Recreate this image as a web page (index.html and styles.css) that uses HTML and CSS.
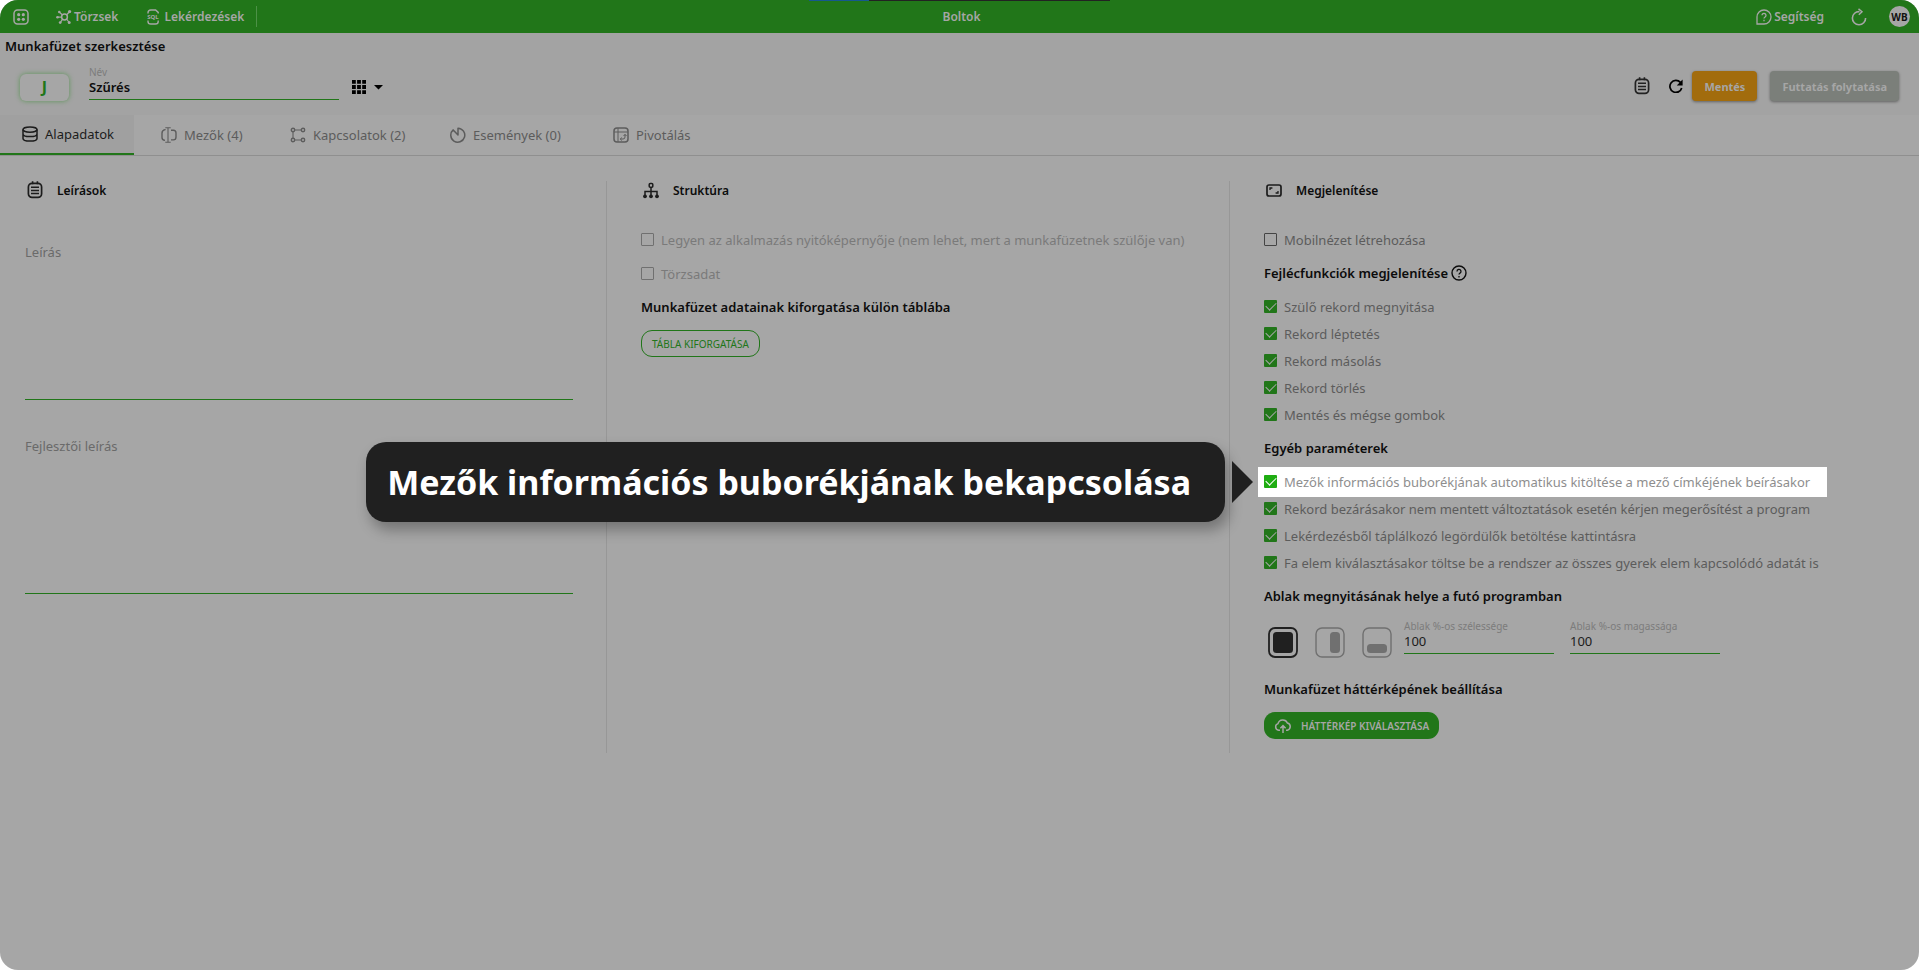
FILE: index.html
```html
<!DOCTYPE html>
<html lang="hu">
<head>
<meta charset="utf-8">
<title>Boltok</title>
<link rel="stylesheet" href="styles.css">
</head>
<body>
<div class="app">
  <header class="topbar">
    <div class="load-strip"></div>
    <nav class="topnav">
      <a class="nav-link app-menu" href="#" aria-label="Alkalmazások">
        <svg width="16" height="16" viewBox="0 0 16 16"><rect x="1" y="1" width="14" height="14" rx="3.5" fill="none" stroke="currentColor" stroke-width="1.5"/><g fill="currentColor"><circle cx="5.7" cy="5.7" r="1.6"/><circle cx="10.3" cy="5.7" r="1.6"/><circle cx="5.7" cy="10.3" r="1.6"/><circle cx="10.3" cy="10.3" r="1.6"/></g></svg>
      </a>
      <a class="nav-link hub" href="#">
        <svg width="16" height="16" viewBox="0 0 16 16"><g fill="none" stroke="currentColor" stroke-width="1.2"><circle cx="8.5" cy="8" r="2.9" stroke-width="1.5"/><path d="M6.5 6 3.5 3.2M10.5 6l2.7-3M10.6 10l2.2 3M6.6 10.2l-2 3M5.5 8.2H2"/></g><g fill="currentColor"><circle cx="3.3" cy="3" r="1.3"/><circle cx="13.6" cy="2.6" r="1.6"/><circle cx="13.2" cy="13.4" r="1.5"/><circle cx="4.2" cy="13.6" r="1.4"/><circle cx="1.5" cy="8.3" r="1.3"/></g></svg>
        <span>Törzsek</span>
      </a>
      <a class="nav-link sql" href="#">
        <svg width="14" height="16" viewBox="0 0 14 16"><path d="M2 4.6V3.8Q2 1 4.8 1h4.8l2.6 2.4v1.2M2 11.6v.8Q2 15 4.8 15h4.6q2.8 0 2.8-2.6v-.8" fill="none" stroke="currentColor" stroke-width="1.4"/><text x="7" y="10.4" class="sql-text" text-anchor="middle">SQL</text></svg>
        <span>Lekérdezések</span>
      </a>
      <span class="nav-divider"></span>
    </nav>
    <h1 class="app-title">Boltok</h1>
    <div class="top-actions">
      <a class="nav-link help" href="#">
        <svg width="16" height="16" viewBox="0 0 16 16"><path d="M1 15V8a7 7 0 1 1 7 7Z" fill="none" stroke="currentColor" stroke-width="1.3"/><path d="M6 6.3a2 2 0 1 1 3.1 1.7Q8 8.7 8 9.6M8 10.8v1.5" fill="none" stroke="currentColor" stroke-width="1.3"/></svg>
        <span>Segítség</span>
      </a>
      <button class="icon-btn" type="button" aria-label="Frissítés">
        <svg width="16" height="18" viewBox="0 0 16 18"><path d="M8.5 3.6A6.6 6.6 0 1 0 14.6 10" fill="none" stroke="currentColor" stroke-width="1.6"/><path d="M7.5.8 11 3.7 7.8 6.8" fill="none" stroke="currentColor" stroke-width="1.5"/></svg>
      </button>
      <button class="avatar" type="button">WB</button>
    </div>
  </header>

  <section class="sheet-head">
    <h2 class="sheet-title">Munkafüzet szerkesztése</h2>
    <div class="sheet-row">
      <div class="sheet-left">
        <button class="letter" type="button">J</button>
        <div class="field name-field">
          <label for="name">Név</label>
          <input id="name" type="text" value="Szűrés">
        </div>
        <button class="grid-btn" type="button" aria-label="Nézet">
          <svg width="32" height="14" viewBox="0 0 32 14" fill="currentColor"><path d="M0 0h3.8v3.8H0zM5.1 0h3.8v3.8H5.1zM10.2 0H14v3.8h-3.8zM0 5.1h3.8v3.8H0zM5.1 5.1h3.8v3.8H5.1zM10.2 5.1H14v3.8h-3.8zM0 10.2h3.8V14H0zM5.1 10.2h3.8V14H5.1zM10.2 10.2H14V14h-3.8zM22 5h9l-4.5 4.5z"/></svg>
        </button>
      </div>
      <div class="sheet-right">
        <button class="icon-btn dark" type="button" aria-label="Leírások">
          <svg width="16" height="18" viewBox="0 0 16 18" fill="none" stroke="currentColor"><rect x="1.4" y="2.4" width="13.2" height="14" rx="3.6" stroke-width="1.7"/><path d="M4 6.3h8M4 9.4h8M4 12.5h8" stroke-width="1.5"/><path d="M5.6.3v3M10.4.3v3" stroke-width="1.6"/></svg>
        </button>
        <button class="icon-btn black" type="button" aria-label="Újratöltés">
          <svg width="14" height="14" viewBox="0 0 14 14"><path d="M11.4 3.4A6 6 0 1 0 12.7 9" fill="none" stroke="currentColor" stroke-width="1.7"/><path d="M13.6.4v6H7.8z" fill="currentColor"/></svg>
        </button>
        <button class="btn save" type="button">Mentés</button>
        <button class="btn run" type="button">Futtatás folytatása</button>
      </div>
    </div>
  </section>

  <nav class="tabs">
    <button class="tab active" type="button">
      <svg width="16" height="16" viewBox="0 0 16 16" fill="none" stroke="currentColor" stroke-width="1.5"><ellipse cx="8" cy="3.6" rx="7" ry="2.7"/><path d="M1 3.6v8.8c0 1.5 3 2.7 7 2.7s7-1.2 7-2.7V3.6M1 8c0 1.4 3 2.6 7 2.6s7-1.2 7-2.6"/></svg>
      <span>Alapadatok</span>
    </button>
    <button class="tab" type="button">
      <svg width="16" height="16" viewBox="0 0 16 16" fill="none" stroke="currentColor"><path d="M4.6 2.6H4Q1 3.2 1 6v4.4q0 2.6 3 3M10 3.2h2.4Q15 3.2 15 6v4q0 2.9-2.6 2.9H10" stroke-width="1.4"/><path d="M7 .8v14.4M4.3.8h5.4M4.3 15.2h5.4" stroke-width="1.1"/></svg>
      <span>Mezők (4)</span>
    </button>
    <button class="tab" type="button">
      <svg width="16" height="16" viewBox="0 0 16 16" fill="none" stroke="currentColor" stroke-width="1.4"><circle cx="3" cy="3" r="1.7"/><circle cx="13" cy="3" r="1.7"/><circle cx="3" cy="13" r="1.7"/><circle cx="13" cy="13" r="1.7"/><path d="M5 3h6M5 13h6M3 5v6" stroke-width="1.1"/></svg>
      <span>Kapcsolatok (2)</span>
    </button>
    <button class="tab" type="button">
      <svg width="16" height="16" viewBox="0 0 16 16" fill="none" stroke="currentColor" stroke-width="1.5" stroke-linejoin="round"><path d="M8 1.2V8L3.2 2.9A7 7 0 1 0 8 1.2Z"/></svg>
      <span>Események (0)</span>
    </button>
    <button class="tab" type="button">
      <svg width="16" height="16" viewBox="0 0 16 16" fill="none" stroke="currentColor"><rect x="1" y="1" width="14" height="14" rx="3" stroke-width="1.5"/><path d="M1 5h14M5 1v14M7.5 12H10q2 0 2-2V7.6M8.8 10.6 7.2 12l1.6 1.5M10.6 9 12 7.3 13.5 9" stroke-width="1"/></svg>
      <span>Pivotálás</span>
    </button>
  </nav>

  <main class="columns">
    <section class="column">
      <h3 class="section-title">
        <svg width="20" height="18" viewBox="-2 0 20 18" fill="none" stroke="currentColor"><rect x="1.4" y="2.4" width="13.2" height="14" rx="3.6" stroke-width="1.7"/><path d="M4 6.3h8M4 9.4h8M4 12.5h8" stroke-width="1.5"/><path d="M5.6.3v3M10.4.3v3" stroke-width="1.6"/></svg>
        <span>Leírások</span>
      </h3>
      <div class="area">
        <label for="desc">Leírás</label>
        <textarea id="desc"></textarea>
      </div>
      <div class="area">
        <label for="devdesc">Fejlesztői leírás</label>
        <textarea id="devdesc"></textarea>
      </div>
    </section>

    <section class="column">
      <h3 class="section-title">
        <svg width="20" height="18" viewBox="-2 -1 20 18" fill="none" stroke="currentColor" stroke-width="1.5"><rect x="6.2" y="1.6" width="3.6" height="3.6" rx="1"/><path d="M8 5.2V14M2 14V9.5h12V14"/><g fill="currentColor" stroke="none"><circle cx="2" cy="14.3" r="1.9"/><circle cx="8" cy="14.3" r="1.9"/><circle cx="14" cy="14.3" r="1.9"/></g></svg>
        <span>Struktúra</span>
      </h3>
      <div class="checks spaced">
        <label class="check disabled"><input type="checkbox" disabled><span>Legyen az alkalmazás nyitóképernyője (nem lehet, mert a munkafüzetnek szülője van)</span></label>
        <label class="check disabled"><input type="checkbox" disabled><span>Törzsadat</span></label>
      </div>
      <h4 class="group-title">Munkafüzet adatainak kiforgatása külön táblába</h4>
      <button class="pill outline" type="button">TÁBLA KIFORGATÁSA</button>
    </section>

    <section class="column">
      <h3 class="section-title">
        <svg width="20" height="18" viewBox="-2 -1 20 18" fill="none" stroke="currentColor"><rect x="1" y="3" width="14" height="11" rx="2" stroke-width="1.7"/><path d="M4 8V6h2.4M12 9v2H9.6" stroke-width="1.3"/></svg>
        <span>Megjelenítése</span>
      </h3>
      <div class="checks">
        <label class="check"><input type="checkbox"><span>Mobilnézet létrehozása</span></label>
      </div>
      <h4 class="group-title">Fejlécfunkciók megjelenítése
        <svg width="16" height="16" viewBox="0 0 16 16" fill="none" stroke="currentColor"><circle cx="8" cy="8" r="7" stroke-width="1.4"/><path d="M6 6.4a2 2 0 1 1 3 1.7q-1 .6-1 1.5M8 11v1.4" stroke-width="1.3"/></svg>
      </h4>
      <div class="checks">
        <label class="check"><input type="checkbox" checked><span>Szülő rekord megnyitása</span></label>
        <label class="check"><input type="checkbox" checked><span>Rekord léptetés</span></label>
        <label class="check"><input type="checkbox" checked><span>Rekord másolás</span></label>
        <label class="check"><input type="checkbox" checked><span>Rekord törlés</span></label>
        <label class="check"><input type="checkbox" checked><span>Mentés és mégse gombok</span></label>
      </div>
      <h4 class="group-title">Egyéb paraméterek</h4>
      <div class="checks">
        <div class="spotlight">
          <label class="check lit"><input type="checkbox" checked><span>Mezők információs buborékjának automatikus kitöltése a mező címkéjének beírásakor</span></label>
          <div class="callout" role="tooltip">
            <div class="callout-box">Mezők információs buborékjának bekapcsolása</div>
            <div class="callout-arrow"></div>
          </div>
        </div>
        <label class="check"><input type="checkbox" checked><span>Rekord bezárásakor nem mentett változtatások esetén kérjen megerősítést a program</span></label>
        <label class="check"><input type="checkbox" checked><span>Lekérdezésből táplálkozó legördülők betöltése kattintásra</span></label>
        <label class="check"><input type="checkbox" checked><span>Fa elem kiválasztásakor töltse be a rendszer az összes gyerek elem kapcsolódó adatát is</span></label>
      </div>
      <h4 class="group-title">Ablak megnyitásának helye a futó programban</h4>
      <div class="window-row">
        <div class="places">
          <button class="place on" type="button" aria-label="Teljes"><svg width="30" height="31" viewBox="0 0 30 31"><rect x="1" y="1" width="28" height="29" rx="6" fill="none" stroke="currentColor" stroke-width="1.8"/><rect x="5" y="5" width="20" height="21" rx="3.5" fill="currentColor"/></svg></button>
          <button class="place" type="button" aria-label="Jobb"><svg width="30" height="31" viewBox="0 0 30 31"><rect x="1" y="1" width="28" height="29" rx="6" fill="none" stroke="currentColor" stroke-width="1.4"/><rect x="15" y="5" width="10" height="21" rx="3.5" fill="currentColor"/></svg></button>
          <button class="place" type="button" aria-label="Alsó"><svg width="30" height="31" viewBox="0 0 30 31"><rect x="1" y="1" width="28" height="29" rx="6" fill="none" stroke="currentColor" stroke-width="1.4"/><rect x="5" y="17" width="20" height="9" rx="3.5" fill="currentColor"/></svg></button>
        </div>
        <div class="field size-field"><label for="w">Ablak %-os szélessége</label><input id="w" type="text" value="100"></div>
        <div class="field size-field"><label for="h">Ablak %-os magassága</label><input id="h" type="text" value="100"></div>
      </div>
      <h4 class="group-title">Munkafüzet háttérképének beállítása</h4>
      <button class="pill solid" type="button">
        <svg width="18" height="16" viewBox="0 0 18 16" fill="none" stroke="currentColor" stroke-width="1.5"><path d="M6 12.2H4.6A3.4 3.4 0 0 1 4 5.6 5 5 0 0 1 13.4 5 3.7 3.7 0 0 1 13.4 12.2H12M9 15V8M6.4 10.2 9 7.6l2.6 2.6"/></svg>
        <span>HÁTTÉRKÉP KIVÁLASZTÁSA</span>
      </button>
    </section>
  </main>
</div>
</body>
</html>
```
FILE: styles.css
```css
* { box-sizing: border-box; }

html, body { height: 100%; }

body {
  margin: 0;
  background: #fff;
  color: #0c0c0c;
  font-family: "Noto Sans", "Open Sans", sans-serif;
  font-size: 13px;
}

button, input, textarea { font: inherit; color: inherit; border-radius: 0; }
button { border: 0; background: none; padding: 0; cursor: pointer; }
h1, h2, h3, h4 { margin: 0; }
svg { display: block; flex: none; }

.app {
  min-height: 100%;
  background: #a6a6a6;
  border-radius: 18px;
  overflow: hidden;
}

.topbar {
  position: relative;
  display: grid;
  grid-template-columns: 1fr auto 1fr;
  align-items: center;
  height: 33px;
  padding: 0 9px 0 13px;
  background: #217619;
  color: #a6a6a6;
}
.load-strip {
  position: absolute;
  top: 0;
  left: 809px;
  width: 301px;
  height: 1px;
  background: linear-gradient(90deg, #16588f 20%, #222 20%);
}
.topnav, .top-actions { display: flex; align-items: center; }
.nav-link {
  display: flex;
  align-items: center;
  gap: 2px;
  color: inherit;
  font-size: 12px;
  font-weight: 600;
  text-decoration: none;
}
.hub { margin-left: 27px; }
.sql { margin-left: 28px; gap: 4px; }
.sql-text { font: 700 6px "Noto Sans", sans-serif; fill: currentColor; }
.nav-divider { width: 1px; height: 21px; margin-left: 12px; background: #4d9147; }
.app-title { font-size: 12px; font-weight: 600; }
.top-actions { justify-content: flex-end; }
.top-actions .icon-btn { margin: 0 22px 0 27px; }
.icon-btn { color: inherit; }
.avatar {
  width: 21px;
  height: 21px;
  border-radius: 50%;
  background: #a6a6a6;
  color: #111;
  font-size: 10px;
  font-weight: 700;
}

.sheet-head { padding: 4px 20px 14px 5px; background: #a3a3a3; }
.sheet-title { font-size: 13px; line-height: 18px; font-weight: 600; }
.sheet-row { display: flex; justify-content: space-between; margin: 10px 0 0 15px; }
.sheet-left, .sheet-right { display: flex; align-items: center; }
.letter {
  width: 49px;
  height: 27px;
  margin: 8px 20px 0 0;
  border-radius: 6px;
  background: #a6a6a6;
  box-shadow: 0 0 5px #5c9457;
  color: #217619;
  font-size: 16px;
  font-weight: 700;
}
.field { display: flex; flex-direction: column; }
.field label { color: #7c7c7c; font-size: 10px; line-height: 12px; }
.field input {
  width: 100%;
  height: 22px;
  padding: 0 0 3px;
  border: 0;
  border-bottom: 1px solid #217619;
  background: none;
  outline: 0;
}
.name-field { width: 250px; }
.name-field input { font-weight: 600; }
.grid-btn { margin: 8px 0 0 13px; color: #000; }
.sheet-right { padding-top: 6px; }
.dark { margin-right: 19px; color: #222; }
.black { margin-right: 9px; color: #000; }
.btn {
  height: 30px;
  padding: 0 12px;
  border-radius: 4px;
  box-shadow: 0 1px 3px rgba(0, 0, 0, .4);
  color: #a6a6a6;
  font-size: 11px;
  font-weight: 700;
}
.save { background: #a26c0d; }
.run { margin-left: 13px; background: #7b7f7a; }

.tabs {
  display: grid;
  grid-template-columns: 139px 129px 160px 163px 1fr;
  border-bottom: 1px solid #8f8f8f;
}
.tab {
  display: flex;
  align-items: center;
  gap: 7px;
  height: 40px;
  padding: 0 0 0 22px;
  color: #5c5c5c;
}
.active {
  width: 134px;
  border-bottom: 2px solid #217619;
  background: #a0a0a0;
  color: #1c1c1c;
}

.columns {
  display: grid;
  grid-template-columns: 606fr 623fr 690fr;
  padding: 25px 0;
}
.column { min-width: 0; min-height: 572px; padding-left: 34px; border-left: 1px solid #979797; }
.column:first-child { padding: 0 33px 0 25px; border: 0; }
.section-title {
  display: flex;
  align-items: center;
  gap: 12px;
  height: 18px;
  margin-bottom: 27px;
  color: #1c1c1c;
  font-size: 12px;
  font-weight: 600;
}
.section-title span { color: #0c0c0c; }

.area { display: flex; flex-direction: column; margin-bottom: 20px; }
.area label { margin-top: 16px; color: #6a6a6a; line-height: 20px; }
.area textarea {
  height: 138px;
  padding: 0;
  border: 0;
  border-bottom: 1px solid #217619;
  background: none;
  outline: 0;
  resize: none;
}

.checks { display: flex; flex-direction: column; }
.spaced { gap: 7px; }
.check {
  display: flex;
  align-items: center;
  gap: 7px;
  height: 27px;
  color: #5c5c5c;
  white-space: nowrap;
}
.check input {
  appearance: none;
  flex: none;
  width: 13px;
  height: 13px;
  margin: 0;
  border: 1px solid #444;
  border-radius: 1px;
}
.check input:checked {
  display: grid;
  place-items: center;
  border: 0;
  background: #217619;
  color: #a6a6a6;
}
.check input:checked::after {
  content: "";
  width: 9px;
  height: 5px;
  margin-bottom: 3px;
  border: solid currentColor;
  border-width: 0 0 1px 1px;
  transform: rotate(-45deg);
}
.disabled { color: #7a7a7a; }
.disabled input { border-color: #707070; }

.spotlight {
  position: relative;
  align-self: flex-start;
  margin: -1px 0 -2px -6px;
  padding: 1px 17px 2px 6px;
  background: #fff;
}
.lit { color: #8e8e8e; }
.check.lit input:checked { background: #1fad12; color: #fff; }
.callout {
  position: absolute;
  top: 50%;
  right: 100%;
  z-index: 2;
  display: flex;
  align-items: center;
  gap: 7px;
  margin-right: 5px;
  transform: translateY(-50%);
}
.callout-box {
  padding: 16px 34px 16px 21px;
  border-radius: 20px;
  background: #202020;
  box-shadow: 4px 8px 14px rgba(0, 0, 0, .3);
  color: #fff;
  font-size: 34px;
  line-height: 48px;
  font-weight: 700;
  white-space: nowrap;
}
.callout-arrow {
  width: 21px;
  height: 42px;
  background: #202020;
  clip-path: polygon(0 0, 100% 50%, 0 100%);
}

.group-title {
  display: flex;
  align-items: center;
  gap: 3px;
  height: 20px;
  margin: 10px 0;
  font-size: 13px;
  font-weight: 600;
}

.window-row { display: flex; align-items: flex-start; height: 53px; padding: 4px 0 0 4px; }
.places { display: flex; gap: 17px; margin: 7px 12px 0 0; }
.place { color: #707070; }
.place.on { color: #202020; }
.size-field { width: 150px; margin-right: 16px; }
.size-field input { color: #1c1c1c; }

.pill {
  display: flex;
  align-items: center;
  height: 27px;
  margin-top: 13px;
  padding: 0 10px;
  border-radius: 11px;
  font-size: 10px;
}
.outline { border: 1px solid #217619; color: #217619; }
.solid { gap: 9px; background: #217619; color: #a6a6a6; font-weight: 600; }
```
